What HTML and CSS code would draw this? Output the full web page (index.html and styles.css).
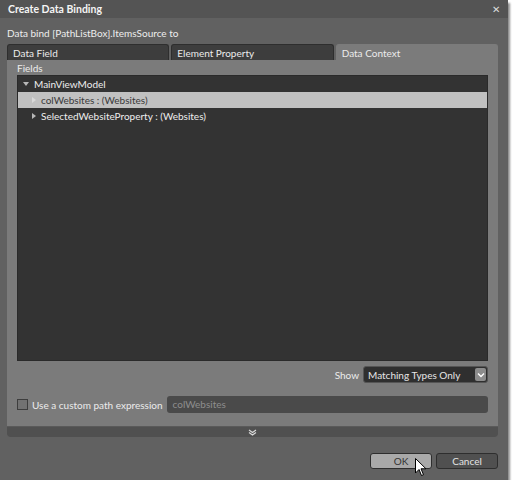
FILE: index.html
```html
<!DOCTYPE html>
<html>
<head>
  <title>Create Data Binding</title>
  <link rel="stylesheet" href="styles.css">
</head>
<body>
  <div class="window">
    <div class="title-bar">
      <span class="title">Create Data Binding</span>
      <span class="close">&#x2715;</span>
    </div>
    <div class="caption">Data bind [PathListBox].ItemsSource to</div>

    <div class="tabs">
      <div class="tab">Data Field</div>
      <div class="tab">Element Property</div>
      <div class="tab active">Data Context</div>
    </div>

    <div class="panel">
      <div class="panel-body">
        <div class="fields-label">Fields</div>
        <div class="tree">
          <div class="row level-0"><span class="arrow open"></span>MainViewModel</div>
          <div class="row level-1 selected"><span class="arrow faded"></span>colWebsites : (Websites)</div>
          <div class="row level-1"><span class="arrow"></span>SelectedWebsiteProperty : (Websites)</div>
        </div>

        <div class="show-row">
          <span class="show-label">Show</span>
          <div class="dropdown">
            <span>Matching Types Only</span>
            <span class="drop-btn">
              <svg width="8" height="6" viewBox="0 0 8 6"><path d="M1 1.5 L4 4.5 L7 1.5" fill="none" stroke="#fff" stroke-width="1.4"/></svg>
            </span>
          </div>
        </div>

        <div class="path-row">
          <span class="checkbox"></span>
          <span class="path-label">Use a custom path expression</span>
          <div class="path-input">colWebsites</div>
        </div>
      </div>
      <div class="expander">
        <svg width="9" height="7" viewBox="0 0 9 7"><path d="M1 1 L4.5 3.5 L8 1 M1 3.5 L4.5 6 L8 3.5" fill="none" stroke="#d8d8d8" stroke-width="1.2"/></svg>
      </div>
    </div>

    <div class="buttons">
      <div class="btn ok">OK</div>
      <div class="btn">Cancel</div>
      <svg class="cursor" width="12" height="19" viewBox="0 0 12 19"><path d="M0.5 0.5 L0.5 15 L4 11.5 L6.5 17.5 L8.5 16.7 L6 10.8 L11 10.8 Z" fill="#fff" stroke="#000" stroke-width="1"/></svg>
    </div>
  </div>
</body>
</html>
```

FILE: styles.css
```css
/* Dark Blend-style dialog */
body {
  margin: 0;
  background-color: #ffffff;
  font-family: Lato, Arial, sans-serif;
  font-size: 10px;
  color: #e6e6e6;
}

.window {
  width: 508px;
  height: 480px;
  background-color: #616161;
  box-shadow: 2px 3px 2px rgba(0, 0, 0, 0.45);
  display: flex;
  flex-direction: column;
}

.title-bar {
  height: 18px;
  background-color: #545454;
  display: flex;
  align-items: center;
  justify-content: space-between;
  padding: 0 8px;
}

.title {
  font-weight: bold;
  font-size: 10.5px;
  color: #f4f4f4;
}

.close {
  font-size: 10px;
  color: #dcdcdc;
}

.caption {
  margin-top: 8px;
  padding-left: 7px;
  line-height: 14px;
  color: #eeeeee;
}

.tabs {
  display: flex;
  gap: 2px;
  margin: 4px 10px 0 7px;
}

.tab {
  flex: 1;
  height: 16px;
  line-height: 16px;
  padding-left: 5px;
  background-color: #3d3d3d;
  border: 1px solid #2e2e2e;
  border-bottom: none;
  border-radius: 3px 3px 0 0;
  box-sizing: border-box;
  color: #ececec;
}

.tab.active {
  background-color: #7b7b7b;
  border-color: #7b7b7b;
}

.panel {
  margin: 0 10px 0 7px;
  height: 377px;
  background-color: #7b7b7b;
  border-radius: 0 0 3px 3px;
  display: flex;
  flex-direction: column;
  overflow: hidden;
}

.panel-body {
  flex: 1;
  padding: 0 10px;
}

.fields-label {
  height: 15px;
  line-height: 17px;
  color: #ececec;
}

.tree {
  height: 286px;
  background-color: #333333;
  border: 1px solid #2a2a2a;
  box-sizing: border-box;
}

.row {
  height: 16px;
  line-height: 15px;
  display: flex;
  align-items: center;
  color: #eeeeee;
}

.row.level-0 {
  padding-left: 5px;
}

.row.level-1 {
  padding-left: 14px;
}

.row.selected {
  background-color: #c1c1c1;
  color: #3a3a3a;
}

.arrow {
  width: 0;
  height: 0;
  border-top: 3px solid transparent;
  border-bottom: 3px solid transparent;
  border-left: 4px solid #b8b8b8;
  margin-right: 5px;
}

.arrow.open {
  border-left: 3px solid transparent;
  border-right: 3px solid transparent;
  border-top: 4px solid #b8b8b8;
  border-bottom: none;
  margin-right: 5px;
}

.arrow.faded {
  border-left-color: #dadada;
}

.show-row {
  display: flex;
  justify-content: flex-end;
  align-items: center;
  margin-top: 5px;
  gap: 4px;
}

.show-label {
  color: #ececec;
}

.dropdown {
  width: 125px;
  height: 17px;
  background-color: #2f2f2f;
  border: 1px solid #555555;
  border-radius: 3px;
  box-sizing: border-box;
  display: flex;
  align-items: center;
  justify-content: space-between;
  padding: 0 1px 0 4px;
}

.drop-btn {
  width: 11px;
  height: 13px;
  background-color: #8c8c8c;
  border-radius: 2px;
  display: flex;
  align-items: center;
  justify-content: center;
}

.path-row {
  display: flex;
  align-items: center;
  margin-top: 13px;
}

.checkbox {
  width: 9px;
  height: 9px;
  border: 1px solid #3d3d3d;
  background-color: #727272;
  margin-right: 4px;
}

.path-label {
  color: #ececec;
  margin-right: 4px;
}

.path-input {
  flex: 1;
  height: 17px;
  line-height: 17px;
  background-color: #4a4a4a;
  border-radius: 3px;
  padding-left: 6px;
  color: #8e8e8e;
}

.expander {
  height: 10px;
  background-color: #505050;
  border-top: 1px solid #5a5a5a;
  display: flex;
  justify-content: center;
  align-items: center;
}

.buttons {
  position: relative;
  display: flex;
  justify-content: flex-end;
  gap: 4px;
  margin: 16px 10px 0 0;
}

.btn {
  width: 62px;
  height: 16px;
  line-height: 14px;
  text-align: center;
  background-color: #505050;
  border: 1px solid #2e2e2e;
  border-radius: 3px;
  box-sizing: border-box;
  color: #e4e4e4;
}

.btn.ok {
  background-color: #a9a9a9;
  color: #333333;
}

.cursor {
  position: absolute;
  left: 415px;
  top: 5px;
}
```
